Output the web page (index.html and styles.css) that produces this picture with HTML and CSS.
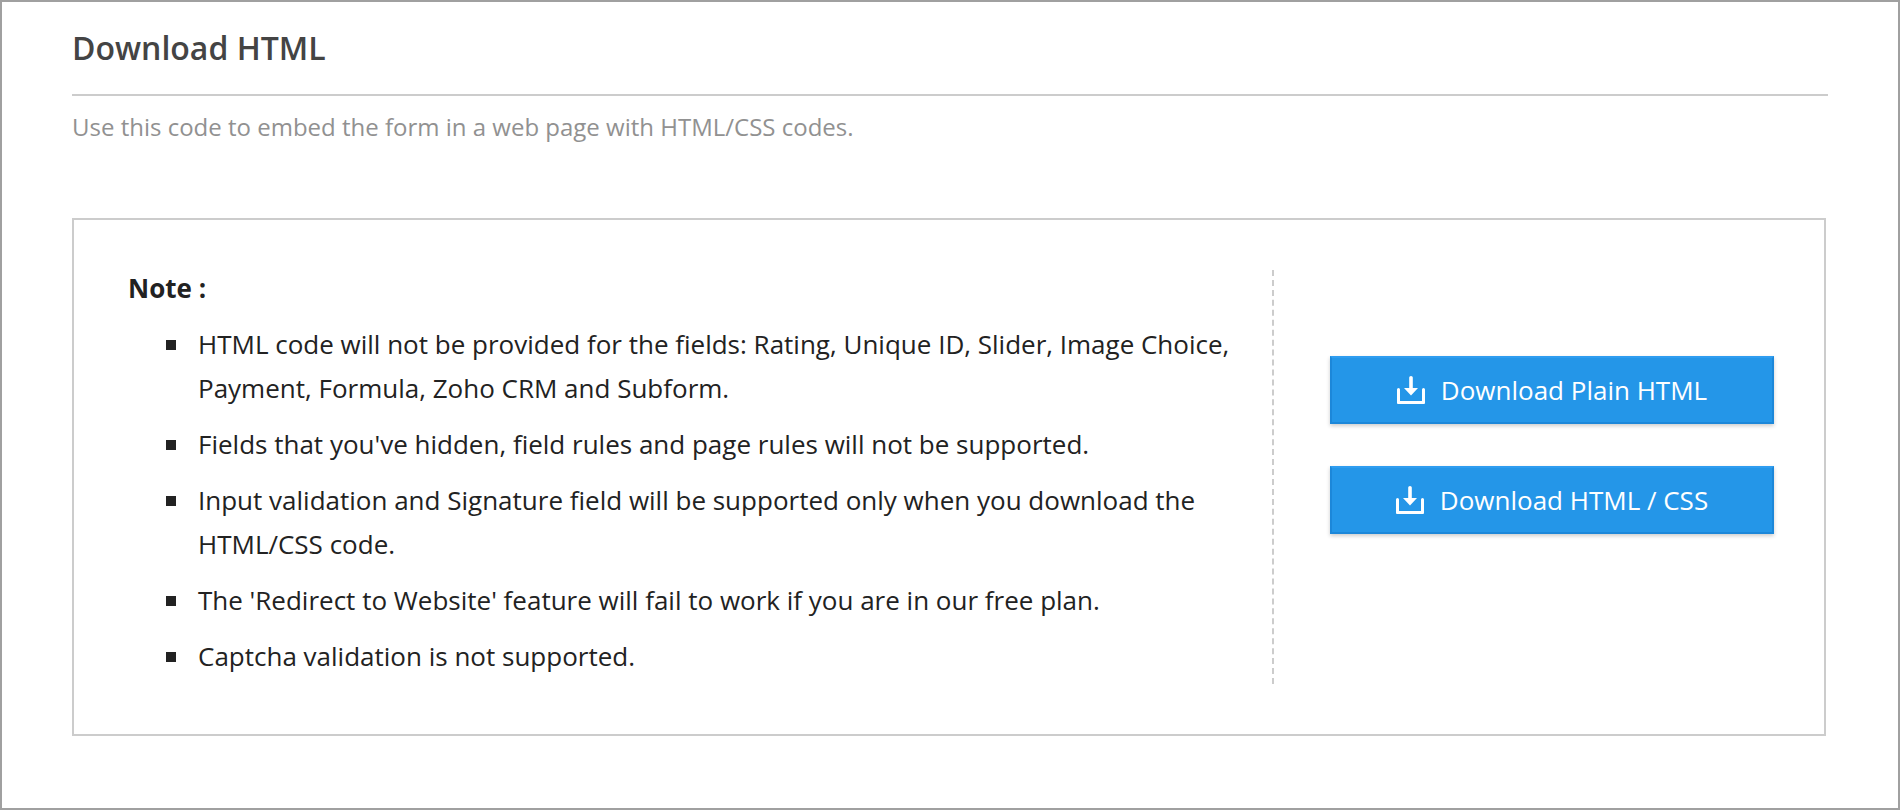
FILE: index.html
```html
<!DOCTYPE html>
<html lang="en">
<head>
<meta charset="utf-8">
<title>Download HTML</title>
<link rel="stylesheet" href="styles.css">
</head>
<body>
<svg class="icon-defs" aria-hidden="true">
  <symbol id="icon-download" viewBox="0 0 28 28">
    <path d="M0 13.5a1.5 1.5 0 0 1 3 0V25h22V13.5a1.5 1.5 0 0 1 3 0V27a1 1 0 0 1-1 1H1a1 1 0 0 1-1-1z"/>
    <path d="M12.2 1.5a1.8 1.5 0 0 1 3.6 0V12H21l-7 7.5L7 12h5.2z"/>
  </symbol>
</svg>
<main class="page">
  <header class="page-header">
    <h1 class="title">Download HTML</h1>
  </header>
  <p class="description">Use this code to embed the form in a web page with HTML/CSS codes.</p>
  <section class="panel">
    <div class="notes">
      <h2 class="notes-title">Note :</h2>
      <ul class="notes-list">
        <li class="note">HTML code will not be provided for the fields: Rating, Unique ID, Slider, Image Choice, Payment, Formula, Zoho CRM and Subform.</li>
        <li class="note">Fields that you've hidden, field rules and page rules will not be supported.</li>
        <li class="note">Input validation and Signature field will be supported only when you download the HTML/CSS code.</li>
        <li class="note">The 'Redirect to Website' feature will fail to work if you are in our free plan.</li>
        <li class="note">Captcha validation is not supported.</li>
      </ul>
    </div>
    <div class="actions">
      <button class="button" type="button"><svg class="icon" aria-hidden="true"><use href="#icon-download"/></svg>Download Plain HTML</button>
      <button class="button" type="button"><svg class="icon" aria-hidden="true"><use href="#icon-download"/></svg>Download HTML / CSS</button>
    </div>
  </section>
</main>
</body>
</html>
```
FILE: styles.css
```css
* {
  box-sizing: border-box;
}

body {
  margin: 0;
  background: #fff;
  color: #222;
  font: 26px/44px "Open Sans", "Noto Sans", sans-serif;
}

.icon-defs {
  display: none;
}

.page {
  min-height: 100vh;
  padding: 24px 70px 72px;
  border: 2px solid #a0a0a0;
}

.page-header {
  padding-bottom: 24px;
  border-bottom: 2px solid #ccc;
}

.title {
  margin: 0;
  color: #444;
  font-size: 32px;
  font-weight: 600;
}

.description {
  margin: 14px 0 74px;
  color: #919191;
  font-size: 24px;
  line-height: 34px;
}

.panel {
  display: flex;
  margin-right: 2px;
  padding: 50px 50px 50px 54px;
  border: 2px solid #ccc;
}

.notes {
  flex: 1;
  min-width: 0;
}

.notes-title {
  margin: 0 0 16px;
  font-size: 26px;
  font-weight: 700;
  line-height: 36px;
}

.notes-list {
  display: flex;
  flex-direction: column;
  gap: 12px;
  margin: 0;
  padding: 0 30px 6px 38px;
  list-style: none;
}

.note {
  display: flex;
  gap: 22px;
}

.note::before {
  content: "";
  flex: none;
  width: 10px;
  height: 10px;
  margin-top: 18px;
  background: #222;
}

.actions {
  display: flex;
  flex: 0 0 502px;
  flex-direction: column;
  gap: 42px;
  padding: 86px 0 0 56px;
  border-left: 2px dashed #ccc;
}

.button {
  display: flex;
  align-items: center;
  justify-content: center;
  gap: 16px;
  height: 68px;
  padding: 0;
  border: 2px solid #1c87d9;
  border-top-color: #2f9df0;
  background: #2496e8;
  box-shadow: 0 2px 4px rgba(0, 0, 0, 0.2);
  color: #fff;
  font: inherit;
  font-weight: 500;
  cursor: pointer;
}

.icon {
  flex: none;
  width: 28px;
  height: 28px;
  fill: currentColor;
}
```
